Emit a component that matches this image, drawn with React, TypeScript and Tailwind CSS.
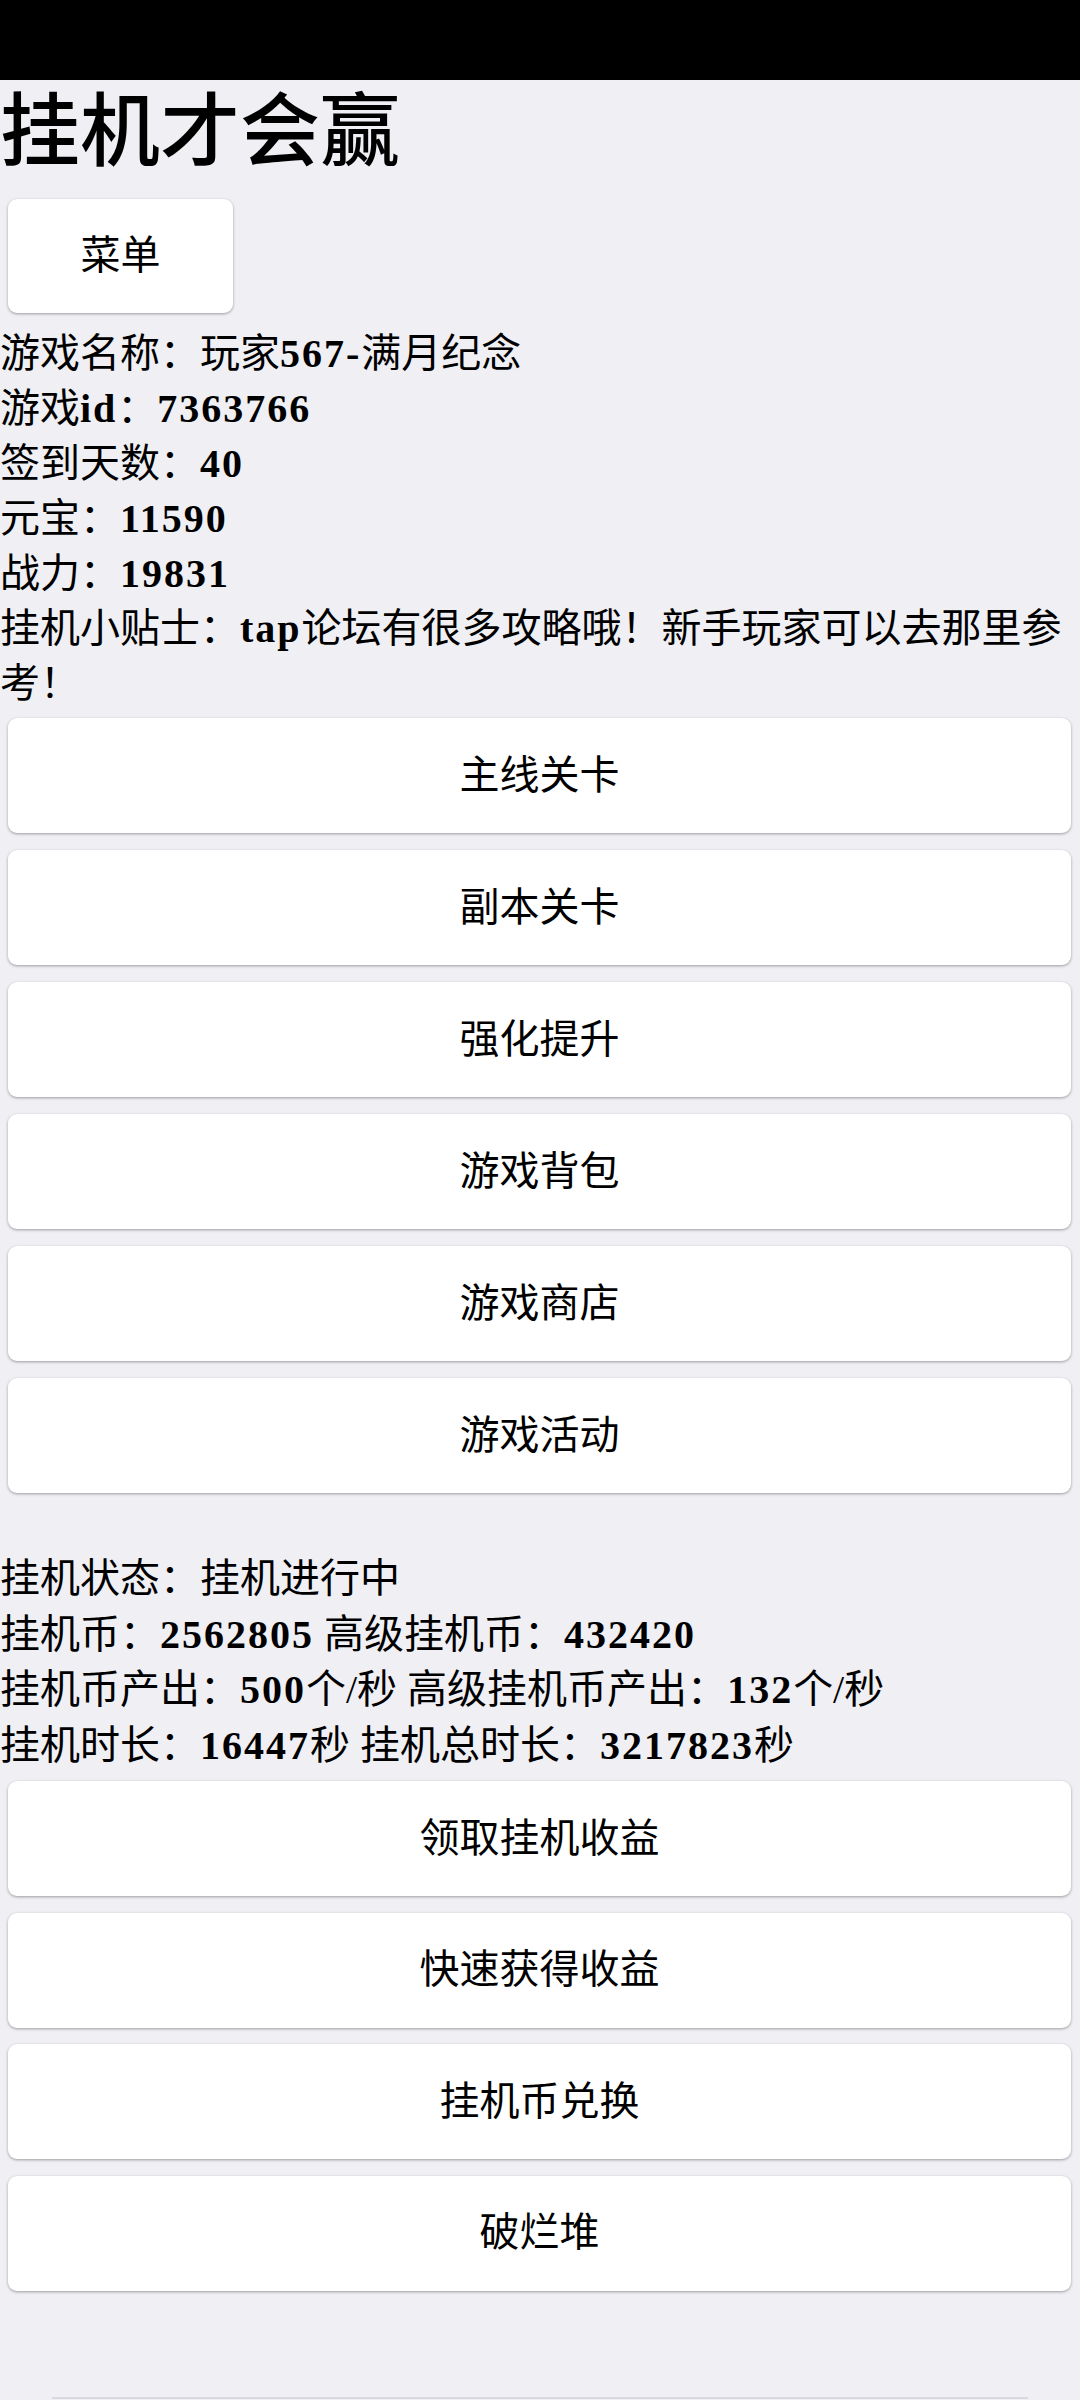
import React from "react";

const FONT = '"Liberation Serif", "Noto Sans CJK SC", serif';

function B({ children }: { children: React.ReactNode }) {
  return <span className="font-bold tracking-[2px]">{children}</span>;
}

function Btn({ label }: { label: string }) {
  return (
    <button className="w-full h-[115px] bg-white rounded-[9px] shadow-[0_1px_3px_rgba(0,0,0,0.35)] text-[40px] text-black flex items-center justify-center">
      {label}
    </button>
  );
}

export default function App() {
  const top = ["主线关卡", "副本关卡", "强化提升", "游戏背包", "游戏商店", "游戏活动"];
  const bottom = ["领取挂机收益", "快速获得收益", "挂机币兑换", "破烂堆"];
  return (
    <div className="min-h-[2400px] bg-[#efeff4] text-black" style={{ fontFamily: FONT }}>
      <div className="h-[80px] bg-black" />
      <h1 className="text-[80px] leading-[104px] font-medium">挂机才会赢</h1>
      <button className="mt-[15px] ml-[8px] w-[225px] h-[114px] bg-white rounded-[9px] shadow-[0_1px_3px_rgba(0,0,0,0.35)] text-[40px] flex items-center justify-center">
        菜单
      </button>
      <div className="mt-[13px] text-[40px] leading-[55px]">
        <div>
          游戏名称：玩家<B>567-</B>满月纪念
        </div>
        <div>
          游戏<B>id</B>：<B>7363766</B>
        </div>
        <div>
          签到天数：<B>40</B>
        </div>
        <div>
          元宝：<B>11590</B>
        </div>
        <div>
          战力：<B>19831</B>
        </div>
        <div>
          挂机小贴士：<B>tap</B>论坛有很多攻略哦！新手玩家可以去那里参考！
        </div>
      </div>
      <div className="mt-[7px] px-[8px] pr-[9px] flex flex-col gap-[17px]">
        {top.map((t) => (
          <Btn key={t} label={t} />
        ))}
      </div>
      <div className="mt-[58px] text-[40px] leading-[55.5px]">
        <div>挂机状态：挂机进行中</div>
        <div>
          挂机币：<B>2562805</B> 高级挂机币：<B>432420</B>
        </div>
        <div>
          挂机币产出：<B>500</B>个/秒 高级挂机币产出：<B>132</B>个/秒
        </div>
        <div>
          挂机时长：<B>16447</B>秒 挂机总时长：<B>3217823</B>秒
        </div>
      </div>
      <div className="mt-[8px] px-[8px] pr-[9px] flex flex-col gap-[16.5px]">
        {bottom.map((t) => (
          <Btn key={t} label={t} />
        ))}
      </div>
      <div className="mt-[106px] mx-[52px] h-[2px] bg-[#d8d8de]" />
    </div>
  );
}
